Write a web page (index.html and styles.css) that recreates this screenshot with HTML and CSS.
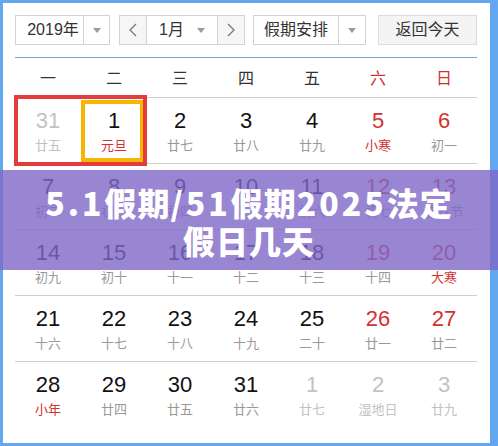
FILE: index.html
```html
<!DOCTYPE html>
<html lang="zh-CN">
<head>
    <meta charset="UTF-8">
    <meta name="viewport" content="width=device-width, initial-scale=1.0">
    <title>万年历</title>
    <link rel="stylesheet" href="styles.css">
</head>
<body>

    <div class="panel">
        <!-- Toolbar -->
        <div class="toolbar">
            <div class="select year-select">
                <span class="select-text">2019年</span>
                <span class="select-arrow"><i class="caret"></i></span>
            </div>
            <div class="select month-group">
                <span class="step prev">
                    <svg width="8" height="14" viewBox="0 0 8 14"><polyline points="7,1 1,7 7,13" fill="none" stroke="#777" stroke-width="1.3"/></svg>
                </span>
                <span class="month-text">1月<i class="caret"></i></span>
                <span class="step next">
                    <svg width="8" height="14" viewBox="0 0 8 14"><polyline points="1,1 7,7 1,13" fill="none" stroke="#777" stroke-width="1.3"/></svg>
                </span>
            </div>
            <div class="select holiday-select">
                <span class="select-text">假期安排</span>
                <span class="select-arrow"><i class="caret"></i></span>
            </div>
            <div class="today-btn">返回今天</div>
        </div>

        <!-- Calendar -->
        <div class="calendar">
            <div class="week-head">
                <span>一</span><span>二</span><span>三</span><span>四</span><span>五</span>
                <span class="weekend">六</span><span class="weekend">日</span>
            </div>

            <div class="cal-row">
                <div class="day other"><b>31</b><em>廿五</em></div>
                <div class="day today"><b>1</b><em class="fest">元旦</em></div>
                <div class="day"><b>2</b><em>廿七</em></div>
                <div class="day"><b>3</b><em>廿八</em></div>
                <div class="day"><b>4</b><em>廿九</em></div>
                <div class="day weekend"><b>5</b><em class="fest">小寒</em></div>
                <div class="day weekend"><b>6</b><em>初一</em></div>
                <div class="mark"></div>
            </div>
            <div class="cal-row">
                <div class="day"><b>7</b><em>初二</em></div>
                <div class="day"><b>8</b><em>初三</em></div>
                <div class="day"><b>9</b><em>初四</em></div>
                <div class="day"><b>10</b><em>初五</em></div>
                <div class="day"><b>11</b><em>初六</em></div>
                <div class="day weekend"><b>12</b><em>初七</em></div>
                <div class="day weekend"><b>13</b><em>腊八节</em></div>
            </div>
            <div class="cal-row">
                <div class="day"><b>14</b><em>初九</em></div>
                <div class="day"><b>15</b><em>初十</em></div>
                <div class="day"><b>16</b><em>十一</em></div>
                <div class="day"><b>17</b><em>十二</em></div>
                <div class="day"><b>18</b><em>十三</em></div>
                <div class="day weekend"><b>19</b><em>十四</em></div>
                <div class="day weekend"><b>20</b><em class="fest">大寒</em></div>
            </div>
            <div class="cal-row">
                <div class="day"><b>21</b><em>十六</em></div>
                <div class="day"><b>22</b><em>十七</em></div>
                <div class="day"><b>23</b><em>十八</em></div>
                <div class="day"><b>24</b><em>十九</em></div>
                <div class="day"><b>25</b><em>二十</em></div>
                <div class="day weekend"><b>26</b><em>廿一</em></div>
                <div class="day weekend"><b>27</b><em>廿二</em></div>
            </div>
            <div class="cal-row last">
                <div class="day"><b>28</b><em class="fest">小年</em></div>
                <div class="day"><b>29</b><em>廿四</em></div>
                <div class="day"><b>30</b><em>廿五</em></div>
                <div class="day"><b>31</b><em>廿六</em></div>
                <div class="day other"><b>1</b><em>廿七</em></div>
                <div class="day other"><b>2</b><em>湿地日</em></div>
                <div class="day other"><b>3</b><em>廿九</em></div>
            </div>
        </div>
    </div>

    <!-- Title banner -->
    <div class="banner">
        <h1><span class="num">5.1</span>假期<span class="num">/51</span>假期<span class="num">2025</span>法定<br>假日几天</h1>
    </div>

</body>
</html>
```

FILE: styles.css
```css
/* General Styles */
* {
    margin: 0;
    padding: 0;
    box-sizing: border-box;
}
body {
    background: #62a7f0;
    font-family: "Liberation Sans", "Noto Sans CJK SC", sans-serif;
    color: #222;
    width: 498px;
    height: 446px;
    overflow: hidden;
    position: relative;
}

.panel {
    background: #fff;
    margin: 3px 8px 3px 3px;
    height: 440px;
    padding: 12px 13px 0 12px;
}

/* Toolbar */
.toolbar {
    display: flex;
    height: 30px;
    margin-bottom: 12px;
}
.select {
    display: flex;
    border: 1px solid #d2d2d2;
    font-size: 16px;
    line-height: 28px;
    color: #333;
}
.select-text {
    text-align: center;
}
.select-arrow {
    border-left: 1px solid #d2d2d2;
    display: flex;
    align-items: center;
    justify-content: center;
}
.caret {
    display: inline-block;
    width: 0;
    height: 0;
    border-left: 4px solid transparent;
    border-right: 4px solid transparent;
    border-top: 5px solid #9a9a9a;
}

.year-select {
    width: 95px;
}
.year-select .select-text {
    width: 67px;
    padding-left: 7px;
}
.year-select .select-arrow {
    width: 26px;
}

.month-group {
    width: 126px;
    margin-left: 9px;
}
.step {
    width: 27px;
    background: #f6f6f6;
    display: flex;
    align-items: center;
    justify-content: center;
}
.prev {
    border-right: 1px solid #d2d2d2;
}
.next {
    border-left: 1px solid #d2d2d2;
}
.month-text {
    flex: 1;
    display: flex;
    align-items: center;
    padding-left: 12px;
    gap: 13px;
}

.holiday-select {
    width: 113px;
    margin-left: 8px;
}
.holiday-select .select-text {
    width: 84px;
}
.holiday-select .select-arrow {
    flex: 1;
}

.today-btn {
    width: 99px;
    margin-left: 12px;
    border: 1px solid #dcdcdc;
    background: #f4f4f4;
    font-size: 16px;
    line-height: 28px;
    text-align: center;
    color: #333;
}

/* Calendar grid */
.calendar {
    border-top: 1px solid #6fa8de;
}
.week-head {
    display: grid;
    grid-template-columns: repeat(7, 66px);
    height: 40px;
    border-bottom: 1px solid #cfcfcf;
    font-family: "Noto Sans CJK SC", sans-serif;
    font-size: 16px;
    line-height: 38px;
    text-align: center;
    color: #333;
}
.week-head .weekend {
    color: #d4302f;
}

.cal-row {
    display: grid;
    grid-template-columns: repeat(7, 66px);
    height: 66px;
    border-bottom: 1px solid #cfcfcf;
    position: relative;
}
.cal-row.last {
    border-bottom: none;
}
.day {
    display: flex;
    flex-direction: column;
    align-items: center;
    padding-top: 10px;
    position: relative;
}
.day b {
    font-weight: normal;
    font-size: 22px;
    line-height: 26px;
    color: #111;
}
.day em {
    font-style: normal;
    font-family: "Noto Sans CJK SC", sans-serif;
    font-size: 13px;
    line-height: 18px;
    margin-top: 2px;
    color: #999;
}
.day.weekend b {
    color: #d4302f;
}
.day em.fest {
    color: #d4302f;
}
.day.other b,
.day.other em {
    color: #c2c2c2;
}

/* today frame */
.day.today::after {
    content: "";
    position: absolute;
    top: 2px;
    left: 0;
    right: 3px;
    bottom: 1px;
    border: 4px solid #f6b500;
}

/* highlight around the first two days */
.mark {
    position: absolute;
    left: -1px;
    top: -3px;
    width: 133px;
    height: 71px;
    border: 4px solid #e33c3c;
    pointer-events: none;
}

/* Title banner */
.banner {
    position: absolute;
    left: 0;
    top: 170px;
    width: 498px;
    height: 100px;
    background: rgba(128, 104, 200, 0.8);
    display: flex;
    align-items: center;
    justify-content: center;
}
.banner h1 {
    font-family: "Noto Sans CJK SC", sans-serif;
    font-weight: 900;
    font-size: 32px;
    line-height: 38px;
    letter-spacing: 1px;
    color: #fff;
    text-align: center;
    padding-top: 2px;
}
.banner .num {
    letter-spacing: 3px;
}
```
